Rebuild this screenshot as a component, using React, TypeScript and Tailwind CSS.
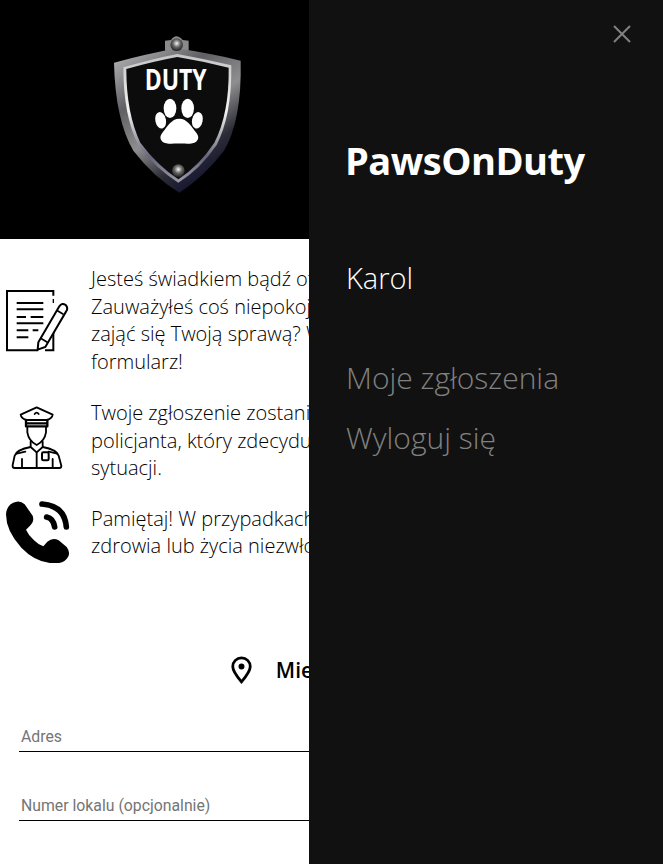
import React from 'react';

const ShieldLogo = () => (
  <svg width="180" height="190" viewBox="0 0 540 570">
    <defs>
      <linearGradient id="metal" x1="0.1" y1="0" x2="0.7" y2="1">
        <stop offset="0" stopColor="#b0b0b2" />
        <stop offset="0.3" stopColor="#606064" />
        <stop offset="0.55" stopColor="#8e8e90" />
        <stop offset="0.78" stopColor="#2c2c36" />
        <stop offset="1" stopColor="#0c0c30" />
      </linearGradient>
      <linearGradient id="metalRim" x1="0" y1="0" x2="0" y2="1">
        <stop offset="0" stopColor="#c4c4c4" />
        <stop offset="0.45" stopColor="#f4f4f4" />
        <stop offset="0.8" stopColor="#66667a" />
        <stop offset="1" stopColor="#9a9aa8" />
      </linearGradient>
      <radialGradient id="rivet" cx="0.5" cy="0.4" r="0.6">
        <stop offset="0" stopColor="#f4f4f4" />
        <stop offset="0.5" stopColor="#666" />
        <stop offset="1" stopColor="#222" />
      </radialGradient>
    </defs>
    <path d="M225 62 L243 60 Q258 38 278 60 L296 62 L296 92 L225 92 Z" fill="#8a8a8a" />
    <path d="M72 128 Q170 102 260 85 Q360 100 452 122 Q456 300 402 392 Q340 472 268 518 Q192 472 130 392 Q76 300 72 128 Z" fill="url(#metal)" />
    <path d="M100 142 Q190 116 262 102 Q340 116 424 136 Q426 285 380 375 Q330 448 265 488 Q200 448 144 375 Q100 285 100 142 Z" fill="url(#metalRim)" />
    <path d="M109 147 Q190 124 262 111 Q340 124 416 143 Q418 280 373 368 Q328 436 265 478 Q202 436 151 368 Q109 280 109 147 Z" fill="#0c0c0c" />
    <circle cx="260" cy="74" r="19" fill="url(#rivet)" />
    <circle cx="265" cy="452" r="19" fill="url(#rivet)" />
    <text x="257" y="211" textAnchor="middle" fill="#fff" fontFamily="'Open Sans', sans-serif" fontWeight="700" fontSize="86" textLength="186" lengthAdjust="spacingAndGlyphs">DUTY</text>
    <g fill="#fff">
      <ellipse cx="240" cy="265" rx="19" ry="29" />
      <ellipse cx="293" cy="265" rx="19" ry="29" />
      <ellipse cx="212" cy="301" rx="16" ry="25" transform="rotate(-12 212 301)" />
      <ellipse cx="322" cy="301" rx="16" ry="25" transform="rotate(12 322 301)" />
      <path d="M268 296 C292 296 304 320 320 340 C332 356 320 372 298 371 C282 370 256 370 238 371 C216 372 204 356 216 340 C232 320 244 296 268 296 Z" />
    </g>
  </svg>
);

const FormIcon = () => (
  <svg width="70" height="65" viewBox="0 85 210 195" fill="none" stroke="#000" strokeWidth="6">
    <path d="M160 108 V94 H21 V272 H115 M135 272 H160 V215" />
    <path d="M160 118 V130" strokeWidth="4" />
    <path d="M50 130 H130 M50 149 H130 M50 172 H78 M92 172 H130 M50 191 H130 M50 212 H85 M98 212 H115 M50 233 H85" strokeWidth="6" />
    <path d="M115 248 L178 140 Q186 128 197 136 Q206 146 198 156 L136 262 L113 270 Z" fill="#fff" strokeWidth="6" />
    <path d="M170 152 L190 164 M122 236 L142 248" strokeWidth="5" />
  </svg>
);

const OfficerIcon = () => (
  <svg width="70" height="65" viewBox="0 30 210 195" fill="none" stroke="#000" strokeWidth="5.5" strokeLinejoin="round" strokeLinecap="round">
    <path d="M62 59 L110 37 L158 59 Q156 71 142 75 L78 75 Q64 71 62 59 Z" />
    <path d="M78 75 V94 H142 V75 M78 85 H142" strokeWidth="7" />
    <path d="M104 57 Q110 49 116 57" />
    <path d="M82 96 V112 Q86 138 110 150 Q134 138 138 112 V96" />
    <path d="M92 140 V156 L110 172 L128 156 V140" />
    <path d="M92 156 Q50 164 44 182 L38 210 V214 Q38 219 44 219 H178 Q184 219 184 212 L176 182 Q170 164 128 156" />
    <path d="M110 172 V219 M66 192 V219 M158 192 V219 M50 176 L76 170 M146 170 L172 176" />
    <rect x="126" y="172" width="20" height="24" rx="4" strokeWidth="6" />
  </svg>
);

const PhoneIcon = () => (
  <svg width="70" height="62" viewBox="0 0 210 186" fill="#000">
    <path d="M18 40 Q20 8 50 2 Q62 -1 74 10 L98 44 Q104 62 90 74 L78 86 Q86 104 102 118 Q116 132 130 136 L142 122 Q158 108 176 118 L200 138 Q212 154 204 168 Q194 186 168 187 Q110 188 64 140 Q18 90 18 40 Z" />
    <path d="M126 9 Q194 14 199 78" fill="none" stroke="#000" strokeWidth="17" strokeLinecap="round" />
    <path d="M140 48 Q160 52 164 78" fill="none" stroke="#000" strokeWidth="17" strokeLinecap="round" />
  </svg>
);

const Row = ({ icon, lines, className }: { icon: React.ReactNode; lines: string[]; className?: string }) => (
  <div className={`flex items-center ${className ?? ''}`}>
    <div className="w-[91px] shrink-0">{icon}</div>
    <p className="text-[20px] leading-[27.5px] font-light whitespace-nowrap text-black">
      {lines.map((l) => (
        <span key={l} className="block">{l}</span>
      ))}
    </p>
  </div>
);

export default function App() {
  return (
    <div className="relative h-[864px] overflow-hidden bg-white font-['Open_Sans',sans-serif]">
      <div className="h-[239px] bg-black flex items-center justify-center w-[360px] pb-[9px]">
        <ShieldLogo />
      </div>

      <div className="pt-[26px]">
        <Row
          icon={<FormIcon />}
          lines={[
            'Jesteś świadkiem bądź ofiarą przemocy?',
            'Zauważyłeś coś niepokojącego? Chcesz, aby',
            'zająć się Twoją sprawą? Wypełnij poniższy',
            'formularz!',
          ]}
        />
        <Row
          className="mt-6"
          icon={<div className="-mt-[5px]"><OfficerIcon /></div>}
          lines={[
            'Twoje zgłoszenie zostanie przekazane do',
            'policjanta, który zdecyduje o dalszej',
            'sytuacji.',
          ]}
        />
        <Row
          className="mt-[19.5px]"
          icon={<PhoneIcon />}
          lines={[
            'Pamiętaj! W przypadkach zagrożenia',
            'zdrowia lub życia niezwłocznie dzwoń pod 112',
          ]}
        />
      </div>

      <div className="mt-[92px] pl-[23px] flex items-center justify-center gap-[24px]">
        <svg width="21" height="29" viewBox="0 0 24 32" fill="none" stroke="#000" strokeWidth="3.2">
          <path d="M12 29 C6 22 2 16 2 11.5 A10 10 0 0 1 22 11.5 C22 16 18 22 12 29 Z" />
          <circle cx="12" cy="11.5" r="3.4" fill="#000" stroke="none" />
        </svg>
        <h2 className="text-[21px] font-semibold text-black">Miejsce zdarzenia</h2>
      </div>

      <div className="px-[19px] pt-[40px] flex flex-col gap-[44px] font-['Roboto',sans-serif]">
        <div className="border-b border-black pb-[5px] pl-[2px] text-[15.8px] leading-[19px] text-[#757575]">Adres</div>
        <div className="border-b border-black pb-[5px] pl-[2px] text-[15.8px] leading-[19px] text-[#757575]">Numer lokalu (opcjonalnie)</div>
      </div>

      <aside className="absolute inset-y-0 right-0 w-[354px] bg-[#111111] pl-[37px] pt-[133px]">
        <button className="absolute top-[25px] right-[32px] text-[#818181]">
          <svg width="18" height="18" viewBox="0 0 18 18" stroke="currentColor" strokeWidth="2">
            <path d="M1 1 L17 17 M17 1 L1 17" />
          </svg>
        </button>
        <h1 className="-ml-px text-[38px] leading-[54px] font-bold tracking-[-0.5px] text-white">PawsOnDuty</h1>
        <p className="mt-[71px] text-[29px] leading-[40px] font-light text-white">Karol</p>
        <nav className="mt-[60px] flex flex-col gap-[20px] text-[30px] leading-[40px] font-light text-[#818181]">
          <span>Moje zgłoszenia</span>
          <span>Wyloguj się</span>
        </nav>
      </aside>
    </div>
  );
}
